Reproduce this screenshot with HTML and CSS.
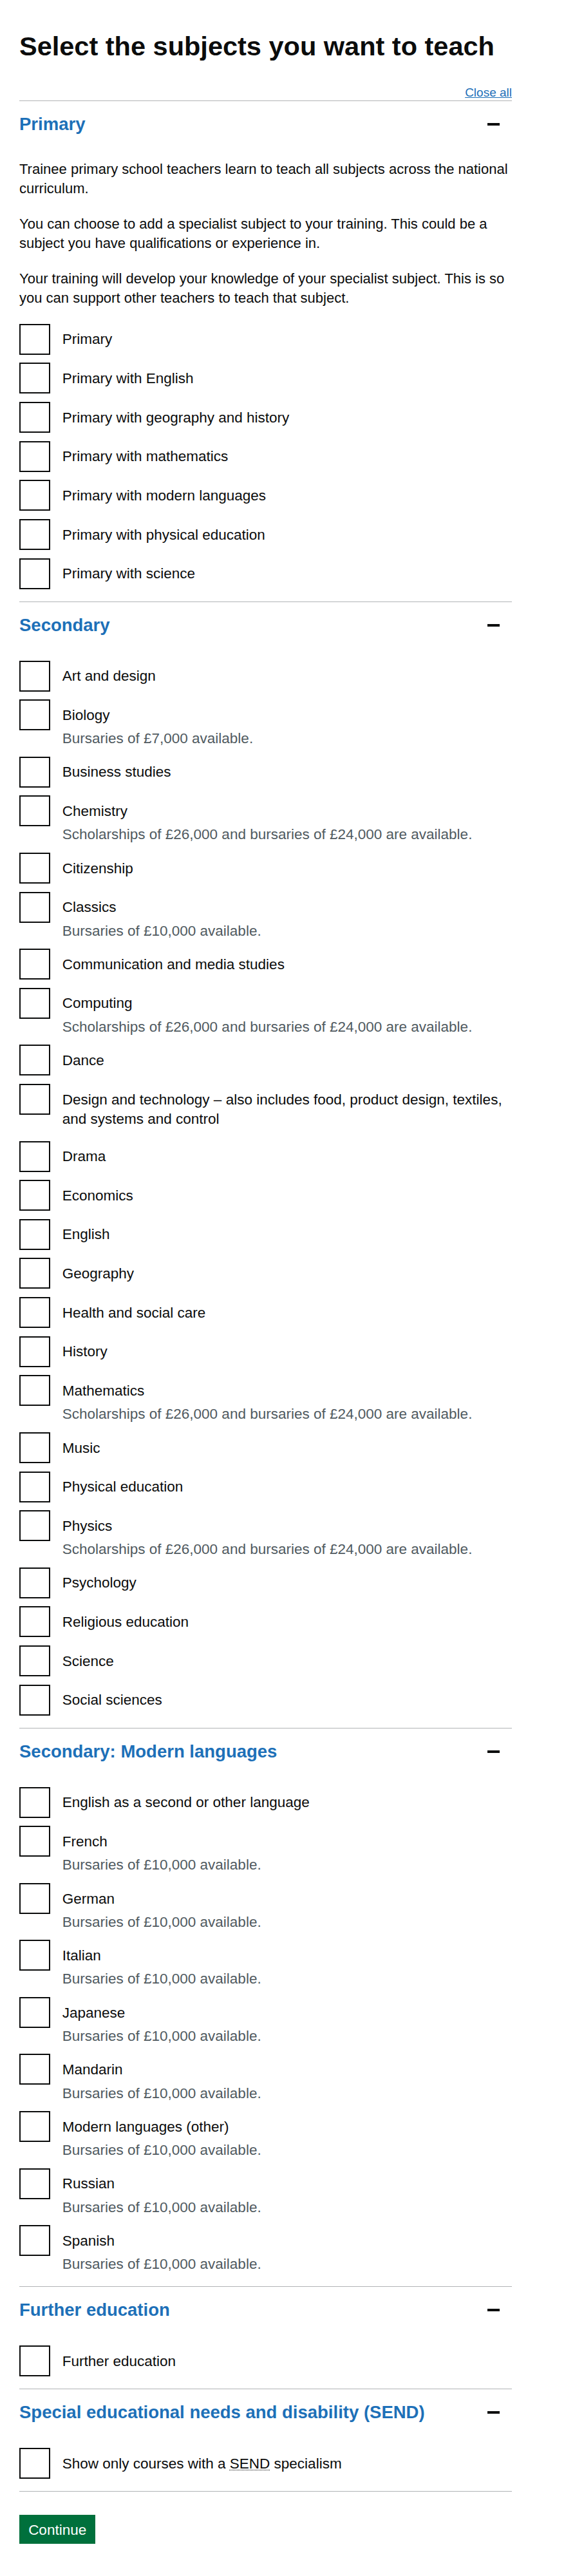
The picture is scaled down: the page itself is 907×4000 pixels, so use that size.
FILE: index.html
```html
<!DOCTYPE html>
<html lang="en">
<head>
<meta charset="utf-8">
<title>Select the subjects you want to teach</title>
<link rel="stylesheet" href="styles.css">
</head>
<body>
<main class="page">
  <h1 class="title">Select the subjects you want to teach</h1>
  <form class="form" action="#">
    <div class="accordion">
      <div class="acc-controls"><a href="#" class="acc-toggle-all">Close all</a></div>

      <section class="acc-section">
        <h2 class="acc-header"><span class="acc-heading">Primary</span><span class="acc-icon"></span></h2>
        <div class="acc-content">
          <p class="body">Trainee primary school teachers learn to teach all subjects across the national curriculum.</p>
          <p class="body">You can choose to add a specialist subject to your training. This could be a subject you have qualifications or experience in.</p>
          <p class="body">Your training will develop your knowledge of your specialist subject. This is so you can support other teachers to teach that subject.</p>
          <div class="checkboxes">
            <div class="cb-item"><input class="cb-input" type="checkbox" id="p1"><label class="cb-label" for="p1">Primary</label></div>
            <div class="cb-item"><input class="cb-input" type="checkbox" id="p2"><label class="cb-label" for="p2">Primary with English</label></div>
            <div class="cb-item"><input class="cb-input" type="checkbox" id="p3"><label class="cb-label" for="p3">Primary with geography and history</label></div>
            <div class="cb-item"><input class="cb-input" type="checkbox" id="p4"><label class="cb-label" for="p4">Primary with mathematics</label></div>
            <div class="cb-item"><input class="cb-input" type="checkbox" id="p5"><label class="cb-label" for="p5">Primary with modern languages</label></div>
            <div class="cb-item"><input class="cb-input" type="checkbox" id="p6"><label class="cb-label" for="p6">Primary with physical education</label></div>
            <div class="cb-item"><input class="cb-input" type="checkbox" id="p7"><label class="cb-label" for="p7">Primary with science</label></div>
          </div>
        </div>
      </section>

      <section class="acc-section">
        <h2 class="acc-header"><span class="acc-heading">Secondary</span><span class="acc-icon"></span></h2>
        <div class="acc-content">
          <div class="checkboxes">
            <div class="cb-item"><input class="cb-input" type="checkbox" id="s1"><label class="cb-label" for="s1">Art and design</label></div>
            <div class="cb-item"><input class="cb-input" type="checkbox" id="s2"><label class="cb-label" for="s2">Biology</label><div class="cb-hint">Bursaries of £7,000 available.</div></div>
            <div class="cb-item"><input class="cb-input" type="checkbox" id="s3"><label class="cb-label" for="s3">Business studies</label></div>
            <div class="cb-item"><input class="cb-input" type="checkbox" id="s4"><label class="cb-label" for="s4">Chemistry</label><div class="cb-hint">Scholarships of £26,000 and bursaries of £24,000 are available.</div></div>
            <div class="cb-item"><input class="cb-input" type="checkbox" id="s5"><label class="cb-label" for="s5">Citizenship</label></div>
            <div class="cb-item"><input class="cb-input" type="checkbox" id="s6"><label class="cb-label" for="s6">Classics</label><div class="cb-hint">Bursaries of £10,000 available.</div></div>
            <div class="cb-item"><input class="cb-input" type="checkbox" id="s7"><label class="cb-label" for="s7">Communication and media studies</label></div>
            <div class="cb-item"><input class="cb-input" type="checkbox" id="s8"><label class="cb-label" for="s8">Computing</label><div class="cb-hint">Scholarships of £26,000 and bursaries of £24,000 are available.</div></div>
            <div class="cb-item"><input class="cb-input" type="checkbox" id="s9"><label class="cb-label" for="s9">Dance</label></div>
            <div class="cb-item"><input class="cb-input" type="checkbox" id="s10"><label class="cb-label" for="s10">Design and technology – also includes food, product design, textiles, and systems and control</label></div>
            <div class="cb-item"><input class="cb-input" type="checkbox" id="s11"><label class="cb-label" for="s11">Drama</label></div>
            <div class="cb-item"><input class="cb-input" type="checkbox" id="s12"><label class="cb-label" for="s12">Economics</label></div>
            <div class="cb-item"><input class="cb-input" type="checkbox" id="s13"><label class="cb-label" for="s13">English</label></div>
            <div class="cb-item"><input class="cb-input" type="checkbox" id="s14"><label class="cb-label" for="s14">Geography</label></div>
            <div class="cb-item"><input class="cb-input" type="checkbox" id="s15"><label class="cb-label" for="s15">Health and social care</label></div>
            <div class="cb-item"><input class="cb-input" type="checkbox" id="s16"><label class="cb-label" for="s16">History</label></div>
            <div class="cb-item"><input class="cb-input" type="checkbox" id="s17"><label class="cb-label" for="s17">Mathematics</label><div class="cb-hint">Scholarships of £26,000 and bursaries of £24,000 are available.</div></div>
            <div class="cb-item"><input class="cb-input" type="checkbox" id="s18"><label class="cb-label" for="s18">Music</label></div>
            <div class="cb-item"><input class="cb-input" type="checkbox" id="s19"><label class="cb-label" for="s19">Physical education</label></div>
            <div class="cb-item"><input class="cb-input" type="checkbox" id="s20"><label class="cb-label" for="s20">Physics</label><div class="cb-hint">Scholarships of £26,000 and bursaries of £24,000 are available.</div></div>
            <div class="cb-item"><input class="cb-input" type="checkbox" id="s21"><label class="cb-label" for="s21">Psychology</label></div>
            <div class="cb-item"><input class="cb-input" type="checkbox" id="s22"><label class="cb-label" for="s22">Religious education</label></div>
            <div class="cb-item"><input class="cb-input" type="checkbox" id="s23"><label class="cb-label" for="s23">Science</label></div>
            <div class="cb-item"><input class="cb-input" type="checkbox" id="s24"><label class="cb-label" for="s24">Social sciences</label></div>
          </div>
        </div>
      </section>

      <section class="acc-section">
        <h2 class="acc-header"><span class="acc-heading">Secondary: Modern languages</span><span class="acc-icon"></span></h2>
        <div class="acc-content">
          <div class="checkboxes">
            <div class="cb-item"><input class="cb-input" type="checkbox" id="m1"><label class="cb-label" for="m1">English as a second or other language</label></div>
            <div class="cb-item"><input class="cb-input" type="checkbox" id="m2"><label class="cb-label" for="m2">French</label><div class="cb-hint">Bursaries of £10,000 available.</div></div>
            <div class="cb-item"><input class="cb-input" type="checkbox" id="m3"><label class="cb-label" for="m3">German</label><div class="cb-hint">Bursaries of £10,000 available.</div></div>
            <div class="cb-item"><input class="cb-input" type="checkbox" id="m4"><label class="cb-label" for="m4">Italian</label><div class="cb-hint">Bursaries of £10,000 available.</div></div>
            <div class="cb-item"><input class="cb-input" type="checkbox" id="m5"><label class="cb-label" for="m5">Japanese</label><div class="cb-hint">Bursaries of £10,000 available.</div></div>
            <div class="cb-item"><input class="cb-input" type="checkbox" id="m6"><label class="cb-label" for="m6">Mandarin</label><div class="cb-hint">Bursaries of £10,000 available.</div></div>
            <div class="cb-item"><input class="cb-input" type="checkbox" id="m7"><label class="cb-label" for="m7">Modern languages (other)</label><div class="cb-hint">Bursaries of £10,000 available.</div></div>
            <div class="cb-item"><input class="cb-input" type="checkbox" id="m8"><label class="cb-label" for="m8">Russian</label><div class="cb-hint">Bursaries of £10,000 available.</div></div>
            <div class="cb-item"><input class="cb-input" type="checkbox" id="m9"><label class="cb-label" for="m9">Spanish</label><div class="cb-hint">Bursaries of £10,000 available.</div></div>
          </div>
        </div>
      </section>

      <section class="acc-section">
        <h2 class="acc-header"><span class="acc-heading">Further education</span><span class="acc-icon"></span></h2>
        <div class="acc-content">
          <div class="checkboxes">
            <div class="cb-item"><input class="cb-input" type="checkbox" id="f1"><label class="cb-label" for="f1">Further education</label></div>
          </div>
        </div>
      </section>

      <section class="acc-section">
        <h2 class="acc-header"><span class="acc-heading">Special educational needs and disability (SEND)</span><span class="acc-icon"></span></h2>
        <div class="acc-content">
          <div class="checkboxes">
            <div class="cb-item"><input class="cb-input" type="checkbox" id="e1"><label class="cb-label" for="e1">Show only courses with a <abbr class="abbr" title="special educational needs and disability">SEND</abbr> specialism</label></div>
          </div>
        </div>
      </section>
    </div>

    <button type="submit" class="button">Continue</button>
  </form>
</main>
</body>
</html>
```

FILE: styles.css
```css
* {
  box-sizing: border-box;
}

html,
body {
  margin: 0;
  padding: 0;
  background: #ffffff;
}

body {
  font-family: "Liberation Sans", Arial, sans-serif;
  color: #0b0c0c;
}

.page {
  width: 765px;
  margin-left: 30px;
  padding-top: 48px;
}

.title {
  margin: 0 0 36px;
  font-size: 41.5px;
  line-height: 48px;
  font-weight: 700;
  white-space: nowrap;
}

.form {
  margin: 0;
}

.accordion {
  margin-bottom: 36px;
}

.acc-controls {
  display: flex;
  justify-content: flex-end;
  height: 24px;
}

.acc-toggle-all {
  font-size: 19px;
  line-height: 24px;
  color: #1d70b8;
  text-decoration: underline;
  text-decoration-thickness: 1px;
}

.acc-section {
  border-top: 1px solid #b1b4b6;
}

.acc-section:last-child {
  border-bottom: 1px solid #b1b4b6;
}

.acc-header {
  margin: 0;
  padding: 18.2px 0;
  display: flex;
  justify-content: space-between;
  align-items: center;
  font-weight: 700;
}

.acc-heading {
  font-size: 27.5px;
  line-height: 36.4px;
  font-weight: 700;
  color: #1d70b8;
}

.acc-icon {
  flex-shrink: 0;
  width: 19px;
  height: 4px;
  margin-right: 19px;
  background: #0b0c0c;
}

.acc-content {
  padding: 18.2px 0 18.5px;
}

.body {
  margin: 0 0 24.27px;
  font-size: 22px;
  line-height: 30.33px;
}

.checkboxes {
  display: block;
}

.cb-item {
  display: grid;
  grid-template-columns: 48.53px 1fr;
  align-items: start;
  min-height: 48.53px;
  margin-bottom: 12.13px;
}

.cb-item:last-child {
  margin-bottom: 0;
}

.cb-input {
  -webkit-appearance: none;
  appearance: none;
  grid-column: 1;
  grid-row: 1 / span 2;
  align-self: start;
  width: 48px;
  height: 48px;
  margin: 0;
  border: 2px solid #0b0c0c;
  border-radius: 0;
  background: #ffffff;
}

.cb-label {
  grid-column: 2;
  grid-row: 1;
  padding: 9.71px 0 6.07px 18.2px;
  font-size: 22.5px;
  line-height: 30.33px;
}

.cb-hint {
  grid-column: 2;
  grid-row: 2;
  padding: 0 0 0 18.2px;
  font-size: 22.5px;
  line-height: 30.33px;
  color: #505a5f;
}

.abbr {
  text-decoration: underline dotted;
  text-decoration-thickness: 1px;
  text-underline-offset: 2px;
}

.button {
  display: inline-block;
  margin: 0;
  padding: 9.71px 12.13px 8.5px;
  border: 2.43px solid transparent;
  border-radius: 0;
  background: #00703c;
  color: #ffffff;
  font-family: "Liberation Sans", Arial, sans-serif;
  font-size: 22.5px;
  line-height: 23px;
  box-shadow: 0 2.43px 0 #002d18;
  cursor: pointer;
}
```
